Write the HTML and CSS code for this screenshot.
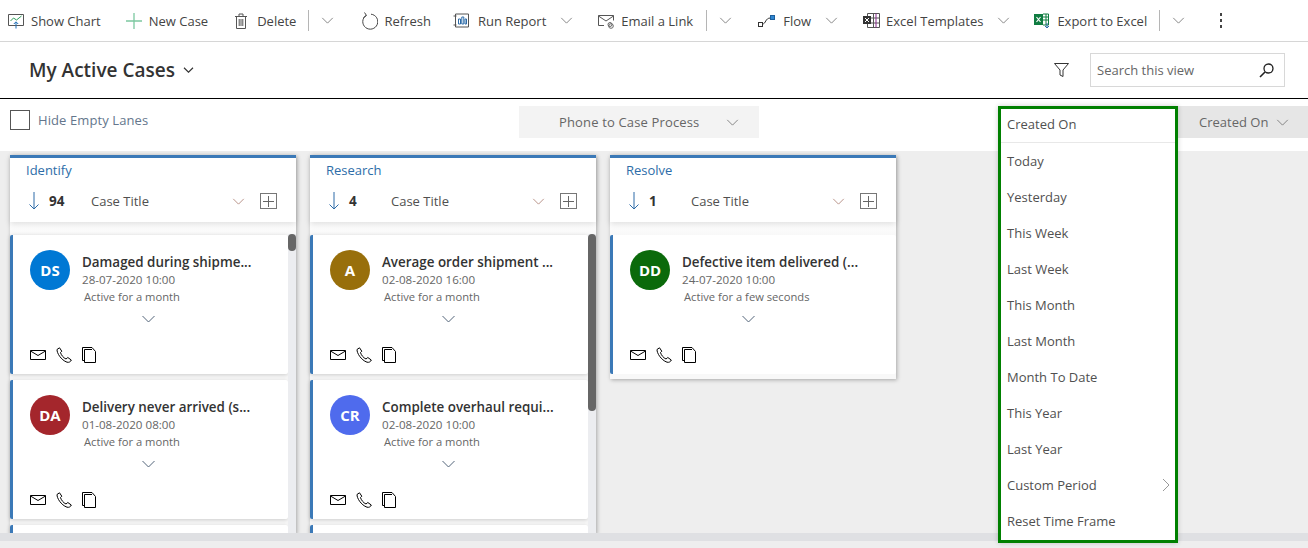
FILE: index.html
```html
<!DOCTYPE html>
<html lang="en">
<head>
    <meta charset="UTF-8">
    <link rel="stylesheet" href="styles.css">
    <title>My Active Cases</title>
</head>
<body>
    <svg class="defs" width="0" height="0">
        <symbol id="chev" viewBox="0 0 14 8"><path d="M1 1l6 6 6-6" fill="none" stroke="currentColor"/></symbol>
        <symbol id="mail" viewBox="0 0 16 14"><path d="M.5 2.500h15v9H.5zM.5 3l7.500 4.500L15.500 3" fill="none" stroke="#000"/></symbol>
        <symbol id="phone" viewBox="0 0 16 16"><path d="M3.500.8L1 2.500C.8 6 5 13 11 15.200c2 .5 3.800-.5 4.300-2.200l-3.500-2.500-1.800 1.500C7.500 11 5 7.800 4.500 5.500l1.300-1.300z" fill="none" stroke="#000"/></symbol>
        <symbol id="doc" viewBox="0 0 14 16"><path d="M2.500 13.500H.5V.5H10L13.500 4.500V15.500H2.500V2.500H10" fill="none" stroke="#000"/></symbol>
    </svg>

    <div class="toolbar">
        <div class="cmd cmd-chart">
            <svg width="16" height="16" viewBox="0 0 16 16"><path d="M.5 1.500h15v11h-15z" fill="none" stroke="#555"/><path d="M2.500 8l3-3 3 2 5-4" fill="none" stroke="#2e9e5b"/><path d="M8 15.500V9M5.800 11L8 8.800l2.200 2.200" fill="none" stroke="#1f6fb5"/></svg>
            <span>Show Chart</span>
        </div>
        <div class="cmd cmd-new">
            <svg width="16" height="16" viewBox="0 0 16 16"><path d="M8 0v16M0 8h16" stroke="#7cc8a0" stroke-width="1.300"/></svg>
            <span>New Case</span>
        </div>
        <div class="cmd cmd-delete">
            <svg width="12" height="16" viewBox="0 0 12 16"><path d="M1.500 3.500h9v12h-9zM0 3.500h12M4 3.500V1h4v2.500M4.200 6v7M6 6v7M7.800 6v7" fill="none" stroke="#555"/></svg>
            <span>Delete</span>
        </div>
        <i class="sep"></i>
        <svg class="chev" width="13" height="7"><use href="#chev"/></svg>
        <div class="cmd cmd-refresh">
            <svg width="17" height="18" viewBox="0 0 17 18"><path d="M5 3.500a7.500 7.500 0 1 0 5-1.300M3.500 .5L5.500 3.500 2.500 5.500" fill="none" stroke="#444"/></svg>
            <span>Refresh</span>
        </div>
        <div class="cmd cmd-report">
            <svg width="16" height="16" viewBox="0 0 16 16"><path d="M2.500 1h13v13h-13zM.5 3h3M.5 12h3" fill="none" stroke="#555"/><path d="M5.500 6v5h2V6zM8.800 4v7h2V4zM12 6v5h1.500V6z" fill="none" stroke="#2c6ba8"/></svg>
            <span>Run Report</span>
        </div>
        <svg class="chev chev-after" width="13" height="7"><use href="#chev"/></svg>
        <div class="cmd cmd-email">
            <svg width="17" height="16" viewBox="0 0 17 16"><path d="M6 12.500H.5v-10h15v5M.5 3L8 8l7.500-5" fill="none" stroke="#555"/><circle cx="12" cy="11.500" r="2" fill="none" stroke="#666"/><circle cx="13" cy="13" r="2.300" fill="none" stroke="#666"/></svg>
            <span>Email a Link</span>
        </div>
        <i class="sep"></i>
        <svg class="chev" width="13" height="7"><use href="#chev"/></svg>
        <div class="cmd cmd-flow">
            <svg width="17" height="12" viewBox="0 0 17 12"><rect x=".5" y="7.500" width="4" height="4" fill="none" stroke="#333"/><path d="M4.500 9C8 9 7 3 12.500 3" fill="none" stroke="#333"/><rect x="12.500" y=".5" width="4" height="4" fill="#2f86d1" stroke="#1d5f9c"/></svg>
            <span>Flow</span>
        </div>
        <svg class="chev chev-after" width="13" height="7"><use href="#chev"/></svg>
        <div class="cmd cmd-templates">
            <svg width="17" height="15" viewBox="0 0 17 15"><path d="M4.500.5h12v14h-12zM4.500 5h12M4.500 10h12M10.500.5v14" fill="none" stroke="#555"/><path d="M13 .5v14" stroke="#8a2b8f"/><rect x="0" y="3" width="8" height="8" fill="#333"/><path d="M2 5l4 4M6 5L2 9" stroke="#fff"/></svg>
            <span>Excel Templates</span>
        </div>
        <svg class="chev chev-after" width="13" height="7"><use href="#chev"/></svg>
        <div class="cmd cmd-export">
            <svg width="16" height="16" viewBox="0 0 16 16"><path d="M9 1h5.500v11H9" fill="none" stroke="#107c41"/><path d="M9 4h5.500M9 7h5.500M12 1v11" stroke="#107c41"/><rect x="0" y="1" width="9" height="11" fill="#107c41"/><path d="M2.500 4l4 5M6.500 4l-4 5" stroke="#fff" stroke-width="1.200"/><path d="M13 10v5M11 13l2 2 2-2" fill="none" stroke="#2c6ba8"/></svg>
            <span>Export to Excel</span>
        </div>
        <i class="sep"></i>
        <svg class="chev" width="13" height="7"><use href="#chev"/></svg>
        <div class="dots"><b></b><b></b><b></b></div>
    </div>

    <div class="view-bar">
        <h1>My Active Cases</h1>
        <svg class="view-chev" width="11" height="6" viewBox="0 0 14 8"><path d="M1 1l6 6 6-6" fill="none" stroke="#333" stroke-width="1.500"/></svg>
        <svg class="filter" width="15" height="14" viewBox="0 0 15 14"><path d="M.5.5h14L9 7v6.500l-3-1.500V7z" fill="none" stroke="#333"/></svg>
        <div class="search">
            <span>Search this view</span>
            <svg width="15" height="15" viewBox="0 0 15 15"><circle cx="9.500" cy="5.500" r="4.500" fill="none" stroke="#222" stroke-width="1.300"/><path d="M6 9l-5 5" stroke="#222" stroke-width="1.600"/></svg>
        </div>
    </div>

    <div class="filter-bar">
        <label class="hide-lanes"><i class="check"></i>Hide Empty Lanes</label>
        <div class="process">
            <span>Phone to Case Process</span>
            <svg class="chev" width="13" height="7"><use href="#chev"/></svg>
        </div>
        <div class="created">
            <span>Created On</span>
            <svg class="chev" width="13" height="7"><use href="#chev"/></svg>
        </div>
    </div>

    <div class="board">
        <section class="lane">
            <header class="lane-head">
                <div class="lane-name">Identify</div>
                <div class="lane-sort">
                    <svg class="arrow" width="10" height="18" viewBox="0 0 10 18"><path d="M5 0v17M.5 12.500L5 17l4.500-4.500" fill="none" stroke="#2c6ba8"/></svg>
                    <b class="count">94</b>
                    <span class="sort-name">Case Title</span>
                    <svg class="chev chev-red" width="13" height="7"><use href="#chev"/></svg>
                    <i class="add"></i>
                </div>
            </header>
            <div class="lane-body">
                <div class="cards">
                    <article class="card">
                        <div class="card-top">
                            <div class="avatar av-blue">DS</div>
                            <div class="card-text">
                                <div class="card-title">Damaged during shipme...</div>
                                <div class="card-date">28-07-2020 10:00</div>
                                <div class="card-active">Active for a month</div>
                            </div>
                        </div>
                        <svg class="card-chev" width="15" height="8"><use href="#chev"/></svg>
                        <div class="card-icons">
                            <svg width="16" height="14"><use href="#mail"/></svg>
                            <svg width="16" height="16"><use href="#phone"/></svg>
                            <svg width="14" height="16"><use href="#doc"/></svg>
                        </div>
                    </article>
                    <article class="card">
                        <div class="card-top">
                            <div class="avatar av-red">DA</div>
                            <div class="card-text">
                                <div class="card-title">Delivery never arrived (s...</div>
                                <div class="card-date">01-08-2020 08:00</div>
                                <div class="card-active">Active for a month</div>
                            </div>
                        </div>
                        <svg class="card-chev" width="15" height="8"><use href="#chev"/></svg>
                        <div class="card-icons">
                            <svg width="16" height="14"><use href="#mail"/></svg>
                            <svg width="16" height="16"><use href="#phone"/></svg>
                            <svg width="14" height="16"><use href="#doc"/></svg>
                        </div>
                    </article>
                    <article class="card"></article>
                </div>
                <div class="track"><div class="thumb" style="height: 17px"></div></div>
            </div>
        </section>

        <section class="lane">
            <header class="lane-head">
                <div class="lane-name">Research</div>
                <div class="lane-sort">
                    <svg class="arrow" width="10" height="18" viewBox="0 0 10 18"><path d="M5 0v17M.5 12.500L5 17l4.500-4.500" fill="none" stroke="#2c6ba8"/></svg>
                    <b class="count">4</b>
                    <span class="sort-name">Case Title</span>
                    <svg class="chev chev-red" width="13" height="7"><use href="#chev"/></svg>
                    <i class="add"></i>
                </div>
            </header>
            <div class="lane-body">
                <div class="cards">
                    <article class="card">
                        <div class="card-top">
                            <div class="avatar av-gold">A</div>
                            <div class="card-text">
                                <div class="card-title">Average order shipment ...</div>
                                <div class="card-date">02-08-2020 16:00</div>
                                <div class="card-active">Active for a month</div>
                            </div>
                        </div>
                        <svg class="card-chev" width="15" height="8"><use href="#chev"/></svg>
                        <div class="card-icons">
                            <svg width="16" height="14"><use href="#mail"/></svg>
                            <svg width="16" height="16"><use href="#phone"/></svg>
                            <svg width="14" height="16"><use href="#doc"/></svg>
                        </div>
                    </article>
                    <article class="card">
                        <div class="card-top">
                            <div class="avatar av-indigo">CR</div>
                            <div class="card-text">
                                <div class="card-title">Complete overhaul requi...</div>
                                <div class="card-date">02-08-2020 10:00</div>
                                <div class="card-active">Active for a month</div>
                            </div>
                        </div>
                        <svg class="card-chev" width="15" height="8"><use href="#chev"/></svg>
                        <div class="card-icons">
                            <svg width="16" height="14"><use href="#mail"/></svg>
                            <svg width="16" height="16"><use href="#phone"/></svg>
                            <svg width="14" height="16"><use href="#doc"/></svg>
                        </div>
                    </article>
                    <article class="card"></article>
                </div>
                <div class="track"><div class="thumb" style="height: 177px"></div></div>
            </div>
        </section>

        <section class="lane lane-short">
            <header class="lane-head">
                <div class="lane-name">Resolve</div>
                <div class="lane-sort">
                    <svg class="arrow" width="10" height="18" viewBox="0 0 10 18"><path d="M5 0v17M.5 12.500L5 17l4.500-4.500" fill="none" stroke="#2c6ba8"/></svg>
                    <b class="count">1</b>
                    <span class="sort-name">Case Title</span>
                    <svg class="chev chev-red" width="13" height="7"><use href="#chev"/></svg>
                    <i class="add"></i>
                </div>
            </header>
            <div class="lane-body">
                <div class="cards">
                    <article class="card">
                        <div class="card-top">
                            <div class="avatar av-green">DD</div>
                            <div class="card-text">
                                <div class="card-title">Defective item delivered (...</div>
                                <div class="card-date">24-07-2020 10:00</div>
                                <div class="card-active">Active for a few seconds</div>
                            </div>
                        </div>
                        <svg class="card-chev" width="15" height="8"><use href="#chev"/></svg>
                        <div class="card-icons">
                            <svg width="16" height="14"><use href="#mail"/></svg>
                            <svg width="16" height="16"><use href="#phone"/></svg>
                            <svg width="14" height="16"><use href="#doc"/></svg>
                        </div>
                    </article>
                </div>
            </div>
        </section>
    </div>
    <div class="hscroll"></div>

    <ul class="date-menu">
        <li class="menu-head">Created On</li>
        <li>Today</li>
        <li>Yesterday</li>
        <li>This Week</li>
        <li>Last Week</li>
        <li>This Month</li>
        <li>Last Month</li>
        <li>Month To Date</li>
        <li>This Year</li>
        <li>Last Year</li>
        <li class="has-sub">Custom Period
            <svg width="8" height="14" viewBox="0 0 8 14"><path d="M1 1l6 6-6 6" fill="none" stroke="#999"/></svg>
        </li>
        <li>Reset Time Frame</li>
    </ul>
</body>
</html>
```

FILE: styles.css
```css
* {
    box-sizing: border-box;
}
html, body {
    height: 100%;
}
body {
    margin: 0;
    height: 548px;
    overflow: hidden;
    position: relative;
    background: #eeeeee;
    font-family: "Open Sans", "Noto Sans", sans-serif;
    font-size: 13px;
    color: #505050;
}
.defs {
    position: absolute;
}
.chev {
    color: #777;
    flex: none;
}

/* command bar */
.toolbar {
    height: 42px;
    background: #fff;
    border-bottom: 1px solid #d6d6d6;
    display: flex;
    align-items: center;
    padding-left: 8px;
    color: #444;
}
.cmd {
    display: flex;
    align-items: center;
    gap: 7px;
    white-space: nowrap;
}
.cmd svg {
    flex: none;
}
.cmd-new { margin-left: 25px; }
.cmd-delete { margin-left: 27px; gap: 10px; padding-right: 1px; }
.sep {
    width: 1px;
    height: 21px;
    margin: 0 12px 0 11px;
    background: #b5b5b5;
}
.cmd-refresh { margin-left: 27px; gap: 6px; }
.cmd-report { margin-left: 22px; gap: 9px; }
.chev-after { margin-left: 14px; }
.cmd-email { margin-left: 25px; gap: 6px; padding-right: 2px; }
.cmd-flow { margin-left: 26px; gap: 8px; }
.cmd-templates { margin-left: 25px; gap: 6px; }
.cmd-export { margin-left: 24px; gap: 7px; padding-right: 1px; }
.dots {
    margin-left: 35px;
    display: flex;
    flex-direction: column;
    gap: 3px;
}
.dots b {
    width: 2px;
    height: 3px;
    background: #444;
}

/* view selector */
.view-bar {
    height: 57px;
    background: #fff;
    border-bottom: 1px solid #000;
    display: flex;
    align-items: center;
    padding-left: 29px;
}
.view-bar h1 {
    margin: 0;
    font-size: 19px;
    font-weight: 600;
    color: #333;
}
.view-chev {
    margin-left: 8px;
}
.filter {
    margin-left: auto;
}
.search {
    width: 195px;
    height: 34px;
    margin: 0 23px 0 21px;
    padding: 0 10px 0 6px;
    border: 1px solid #d8d8d8;
    display: flex;
    align-items: center;
    justify-content: space-between;
    color: #666;
}

/* filters above the board */
.filter-bar {
    height: 52px;
    background: #fff;
    display: flex;
    align-items: flex-start;
    padding: 7px 0 0 10px;
}
.hide-lanes {
    width: 509px;
    display: flex;
    align-items: center;
    gap: 8px;
    padding-top: 4px;
    color: #64768c;
    letter-spacing: 0.1px;
}
.check {
    width: 20px;
    height: 20px;
    border: 1px solid #555;
}
.process {
    width: 240px;
    height: 32px;
    padding-left: 40px;
    display: flex;
    align-items: center;
    gap: 27px;
    background: #f3f3f3;
    color: #666;
    letter-spacing: 0.15px;
}
.created {
    width: 131px;
    height: 32px;
    margin-left: auto;
    padding-left: 22px;
    display: flex;
    align-items: center;
    gap: 8px;
    background: #e6e6e6;
    color: #666;
}

/* board */
.board {
    height: 382px;
    padding: 4px 0 0 10px;
    display: flex;
    align-items: flex-start;
    gap: 14px;
    overflow: hidden;
}
.lane {
    width: 286px;
    height: 379px;
    flex: none;
    display: flex;
    flex-direction: column;
    background: #f8f8f8;
    box-shadow: 1px 1px 4px rgba(0, 0, 0, 0.3);
}
.lane-short {
    height: 224px;
}
.lane-head {
    height: 67px;
    flex: none;
    background: #fff;
    border-top: 3px solid #3b79b7;
    box-shadow: 0 2px 6px rgba(0, 0, 0, 0.13);
    position: relative;
}
.lane-name {
    padding: 3px 0 0 16px;
    color: #2d6da8;
    line-height: 18px;
}
.lane-sort {
    margin-top: 12px;
    padding-left: 19px;
    height: 20px;
    display: flex;
    align-items: center;
}
.count {
    width: 42px;
    margin-left: 10px;
    font-size: 13.5px;
    color: #333;
}
.sort-name {
    width: 141px;
    color: #505050;
}
.chev-red {
    color: #b0867a;
}
.add {
    width: 17px;
    height: 16px;
    margin-left: 15px;
    border: 1px solid #777;
    background:
        linear-gradient(#666, #666) center / 11px 1px no-repeat,
        linear-gradient(#666, #666) center / 1px 11px no-repeat;
}
.lane-body {
    flex: 1;
    min-height: 0;
    display: flex;
    padding-top: 12px;
    background: linear-gradient(#fff, #f8f8f8 14px);
}
.cards {
    flex: 1;
    min-width: 0;
    display: flex;
    flex-direction: column;
    gap: 6px;
    padding-top: 1px;
}
.track {
    width: 8px;
    flex: none;
    background: #ecedf0;
}
.thumb {
    background: #666;
    border-radius: 4px;
}
.card {
    height: 139px;
    flex: none;
    padding: 15px 0 0 17px;
    background: #fff;
    border-left: 3px solid #3b79b7;
    border-radius: 2px;
    box-shadow: 0 1px 4px rgba(0, 0, 0, 0.18);
}
.lane-short .card {
    box-shadow: none;
}
.card-top {
    display: flex;
    gap: 12px;
}
.avatar {
    width: 40px;
    height: 40px;
    flex: none;
    border-radius: 50%;
    display: flex;
    align-items: center;
    justify-content: center;
    color: #fff;
    font-size: 15px;
    font-weight: 700;
}
.av-blue { background: #0078d4; }
.av-red { background: #a4262c; }
.av-gold { background: #986f0b; }
.av-indigo { background: #4f6bed; }
.av-green { background: #0b6a0b; }
.card-title {
    font-size: 13.4px;
    font-weight: 600;
    line-height: 18px;
    margin-top: 3px;
    color: #333;
    white-space: nowrap;
}
.card-date {
    font-size: 11.6px;
    line-height: 18px;
    color: #666;
}
.card-active {
    font-size: 11.2px;
    line-height: 17px;
    margin: -1px 0 0 2px;
    color: #666;
}
.card-chev {
    display: block;
    margin: 10px 0 0 111px;
    color: #53657a;
}
.card-icons {
    margin-top: 24px;
    display: flex;
    align-items: center;
    gap: 10px;
}
.hscroll {
    height: 8px;
    background: #dfe0e3;
}

/* date menu over the board */
.date-menu {
    position: absolute;
    left: 998px;
    top: 106px;
    width: 180px;
    height: 437px;
    margin: 0;
    padding: 0;
    list-style: none;
    background: #fff;
    border: 3px solid #008000;
    box-shadow: 0 0 5px rgba(0, 0, 0, 0.2);
}
.date-menu li {
    height: 36px;
    padding-left: 6px;
    padding-right: 5px;
    display: flex;
    align-items: center;
    justify-content: space-between;
}
.date-menu .menu-head {
    height: 34px;
    padding-bottom: 3px;
    border-bottom: 1px solid #e8e8e8;
}
```
